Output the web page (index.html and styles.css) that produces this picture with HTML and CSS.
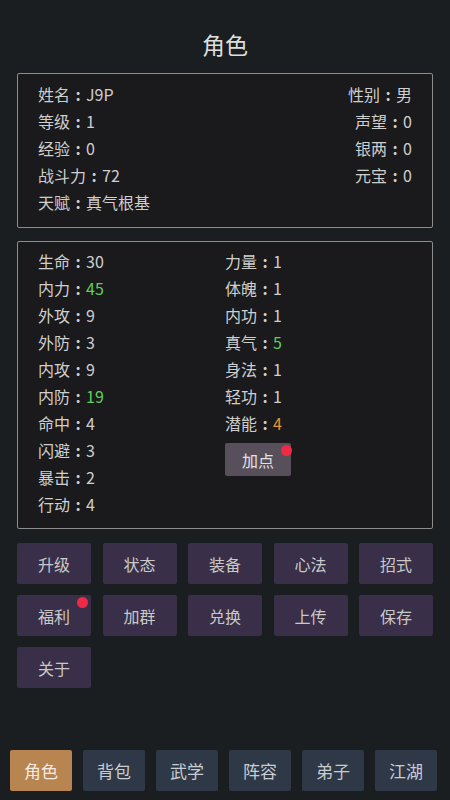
FILE: index.html
```html
<!DOCTYPE html>
<html lang="zh">
<head>
<meta charset="utf-8">
<link rel="stylesheet" href="styles.css">
</head>
<body>
<div class="page">
  <h1 class="title">角色</h1>
  <section class="panel info">
    <div class="info-row"><span>姓名<span class="c">:</span>J9P</span><span>性别<span class="c">:</span>男</span></div>
    <div class="info-row"><span>等级<span class="c">:</span>1</span><span>声望<span class="c">:</span>0</span></div>
    <div class="info-row"><span>经验<span class="c">:</span>0</span><span>银两<span class="c">:</span>0</span></div>
    <div class="info-row"><span>战斗力<span class="c">:</span>72</span><span>元宝<span class="c">:</span>0</span></div>
    <div class="info-row"><span>天赋<span class="c">:</span>真气根基</span></div>
  </section>
  <section class="panel stats">
    <div class="col">
      <div class="stat">生命<span class="c">:</span>30</div>
      <div class="stat">内力<span class="c">:</span><span class="green">45</span></div>
      <div class="stat">外攻<span class="c">:</span>9</div>
      <div class="stat">外防<span class="c">:</span>3</div>
      <div class="stat">内攻<span class="c">:</span>9</div>
      <div class="stat">内防<span class="c">:</span><span class="green">19</span></div>
      <div class="stat">命中<span class="c">:</span>4</div>
      <div class="stat">闪避<span class="c">:</span>3</div>
      <div class="stat">暴击<span class="c">:</span>2</div>
      <div class="stat">行动<span class="c">:</span>4</div>
    </div>
    <div class="col">
      <div class="stat">力量<span class="c">:</span>1</div>
      <div class="stat">体魄<span class="c">:</span>1</div>
      <div class="stat">内功<span class="c">:</span>1</div>
      <div class="stat">真气<span class="c">:</span><span class="green">5</span></div>
      <div class="stat">身法<span class="c">:</span>1</div>
      <div class="stat">轻功<span class="c">:</span>1</div>
      <div class="stat">潜能<span class="c">:</span><span class="orange">4</span></div>
      <div class="add-btn">加点<span class="dot dot-add"></span></div>
    </div>
  </section>
  <div class="actions">
    <div class="act">升级</div>
    <div class="act">状态</div>
    <div class="act">装备</div>
    <div class="act">心法</div>
    <div class="act">招式</div>
    <div class="act">福利<span class="dot dot-act"></span></div>
    <div class="act">加群</div>
    <div class="act">兑换</div>
    <div class="act">上传</div>
    <div class="act">保存</div>
    <div class="act">关于</div>
  </div>
  <nav class="tabs">
    <div class="tab active">角色</div>
    <div class="tab">背包</div>
    <div class="tab">武学</div>
    <div class="tab">阵容</div>
    <div class="tab">弟子</div>
    <div class="tab">江湖</div>
  </nav>
</div>
</body>
</html>
```
FILE: styles.css
```css
html, body {
  margin: 0;
  padding: 0;
  background: #1b1e21;
}
body {
  font-family: "Noto Sans CJK SC", "Noto Sans", sans-serif;
  color: #cfcfcf;
}
.page {
  height: 800px;
  display: flex;
  flex-direction: column;
  padding: 0 17px;
  box-sizing: border-box;
}
.title {
  margin: 29px 0 14px;
  font-size: 23px;
  line-height: 30px;
  font-weight: normal;
  text-align: center;
  color: #dedede;
}
.panel {
  border: 1px solid #8c8c8c;
  border-radius: 2px;
  background: #1a191b;
  font-size: 16px;
  line-height: 27px;
}
.c {
  display: inline-block;
  width: 1em;
  text-align: center;
  font-weight: bold;
}
.info {
  padding: 7px 20px 11px;
}
.info-row {
  display: flex;
  justify-content: space-between;
}
.stats {
  margin-top: 13px;
  padding: 6px 20px 10px;
  display: grid;
  grid-template-columns: 1fr 1fr;
}
.green { color: #5fd05a; }
.orange { color: #e3962e; }
.add-btn {
  position: relative;
  width: 66px;
  height: 33px;
  margin-top: 6px;
  background: #57505b;
  border-radius: 2px;
  color: #e2e2e2;
  display: flex;
  align-items: center;
  justify-content: center;
  line-height: 1;
}
.dot {
  position: absolute;
  width: 11px;
  height: 11px;
  border-radius: 50%;
  background: #f02a45;
}
.dot-add { top: 2px; right: -1px; }
.dot-act { top: 2px; right: 3px; }
.actions {
  margin-top: 14px;
  display: grid;
  grid-template-columns: repeat(5, 1fr);
  column-gap: 11.5px;
  row-gap: 11px;
}
.act {
  position: relative;
  height: 41px;
  background: #3a2f48;
  border-radius: 2px;
  display: flex;
  align-items: center;
  justify-content: center;
  font-size: 16px;
  color: #c9c9c9;
}
.tabs {
  margin: auto -7px 9px;
  display: flex;
  gap: 11px;
}
.tab {
  width: 62px;
  height: 41px;
  background: #2e3846;
  border-radius: 2px;
  display: flex;
  align-items: center;
  justify-content: center;
  font-size: 17px;
  color: #c9ccd0;
}
.tab.active {
  background: #b8844f;
  color: #f3ebe2;
}
```
